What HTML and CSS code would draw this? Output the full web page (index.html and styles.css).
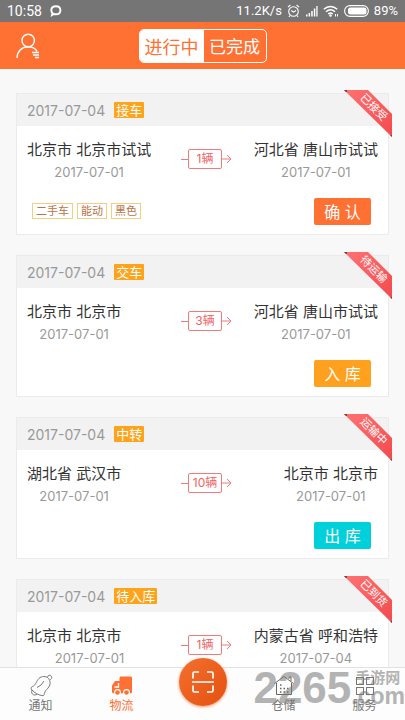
FILE: index.html
```html
<!DOCTYPE html>
<html lang="zh-CN">
<head>
<meta charset="utf-8">
<meta name="viewport" content="width=device-width, initial-scale=1">
<title>物流</title>
<link rel="stylesheet" href="styles.css">
</head>
<body>
<svg class="defs" aria-hidden="true">
  <defs>
    <linearGradient id="ribbon-fill" x1="0" y1="0" x2="1" y2="1">
      <stop offset="0" stop-color="#ff7272"/>
      <stop offset="1" stop-color="#f24a4e"/>
    </linearGradient>
    <symbol id="ribbon" viewBox="0 0 48 48">
      <path d="M0 1h24l24 24v23z" fill="url(#ribbon-fill)"/>
      <path d="M0 1h3v2h-1zM46 46h2v2z" fill="#8c3436"/>
    </symbol>
    <symbol id="arrow" viewBox="0 0 10 10">
      <path d="M0 5h9M5 1l4 4-4 4" fill="none" stroke="#f07a7a"/>
    </symbol>
  </defs>
</svg>
<div class="app">
  <div class="status">
    <span class="status-time">10:58</span>
    <svg class="status-chat" width="12" height="12" viewBox="0 0 12 12"><path d="M6 1.2c3 0 4.400 1.800 4.400 4S9 9.300 6 9.300c-.9 0-1.500-.1-2.200-.3L2 10l.5-2C1.700 7.300 1.300 6.300 1.300 5.200c0-2.200 1.700-4 4.700-4z" fill="none" stroke="#fff" stroke-width="1.900"/></svg>
    <span class="status-speed">11.2K/s</span>
    <svg width="13" height="14" viewBox="0 0 13 14" fill="none" stroke="#fff" stroke-width="1.100"><circle cx="6.500" cy="7.500" r="4.800"/><path d="M4.200 6.500l2.300 1.700 2.500-1.700M1 3.200L3.400 1M12 3.200L9.600 1M3 11.500l-1 1.500M10 11.500l1 1.500"/></svg>
    <svg width="13" height="12" viewBox="0 0 13 12" fill="#fff"><path d="M1 9.500h1.500v2H1zM3.600 8h1.500v3.500H3.600zM6.200 6h1.500v5.500H6.200zM8.800 3.500h1.500v8H8.800zM11.300 1h1.300v10.500h-1.300z"/></svg>
    <svg width="16" height="12" viewBox="0 0 16 12" fill="none" stroke="#fff" stroke-width="1.500"><path d="M.8 4.300c4-3.600 9.400-3.600 13.400 0M3 6.700c2.700-2.400 6.300-2.400 9 0M5.200 9c1.400-1.200 3.200-1.200 4.600 0"/><circle cx="7.500" cy="10.500" r=".6"/><path d="M12.500 9v2.500M14.500 9v2.500" stroke-width="1"/></svg>
    <svg width="25" height="12" viewBox="0 0 25 12"><rect x=".6" y=".6" width="23.800" height="10.800" rx="5.400" fill="none" stroke="#fff" stroke-width="1.100"/><rect x="4" y="2.500" width="18.500" height="7" rx="2.500" fill="#fff"/></svg>
    <span>89%</span>
  </div>

  <header class="topbar">
    <button class="profile" type="button" aria-label="个人中心">
      <svg width="26" height="26" viewBox="0 0 26 26" fill="none" stroke="#fff" stroke-width="1.400"><circle cx="13.200" cy="7.500" r="6.200"/><path d="M2 25c.2-6.500 4.500-11 11-11.200 4 0 7.200 1.500 9 4.500M17 19.500h7M18 22h6M20 24.500h4"/></svg>
    </button>
    <div class="segment">
      <button class="segment-item is-active" type="button">进行中</button>
      <button class="segment-item" type="button">已完成</button>
    </div>
  </header>

  <main class="list">
    <article class="card">
      <div class="card-head"><time>2017-07-04</time><span class="kind">接车</span></div>
      <div class="route">
        <div class="stop"><span class="place">北京市 北京市试试</span><time>2017-07-01</time></div>
        <div class="count"><i></i><b>1辆</b><svg><use href="#arrow"/></svg></div>
        <div class="stop"><span class="place">河北省 唐山市试试</span><time>2017-07-01</time></div>
      </div>
      <div class="card-foot">
        <ul class="tags"><li>二手车</li><li>能动</li><li>黑色</li></ul>
        <button class="action confirm" type="button">确 认</button>
      </div>
      <div class="ribbon"><svg><use href="#ribbon"/></svg><span>已接受</span></div>
    </article>

    <article class="card">
      <div class="card-head"><time>2017-07-04</time><span class="kind">交车</span></div>
      <div class="route">
        <div class="stop"><span class="place">北京市 北京市</span><time>2017-07-01</time></div>
        <div class="count"><i></i><b>3辆</b><svg><use href="#arrow"/></svg></div>
        <div class="stop"><span class="place">河北省 唐山市试试</span><time>2017-07-01</time></div>
      </div>
      <div class="card-foot"><button class="action store" type="button">入 库</button></div>
      <div class="ribbon"><svg><use href="#ribbon"/></svg><span>待运输</span></div>
    </article>

    <article class="card">
      <div class="card-head"><time>2017-07-04</time><span class="kind">中转</span></div>
      <div class="route">
        <div class="stop"><span class="place">湖北省 武汉市</span><time>2017-07-01</time></div>
        <div class="count"><i></i><b>10辆</b><svg><use href="#arrow"/></svg></div>
        <div class="stop"><span class="place">北京市 北京市</span><time>2017-07-01</time></div>
      </div>
      <div class="card-foot"><button class="action release" type="button">出 库</button></div>
      <div class="ribbon"><svg><use href="#ribbon"/></svg><span>运输中</span></div>
    </article>

    <article class="card">
      <div class="card-head"><time>2017-07-04</time><span class="kind">待入库</span></div>
      <div class="route">
        <div class="stop stop-wide"><span class="place">北京市 北京市</span><time>2017-07-01</time></div>
        <div class="count"><i></i><b>1辆</b><svg><use href="#arrow"/></svg></div>
        <div class="stop"><span class="place">内蒙古省 呼和浩特</span><time>2017-07-04</time></div>
      </div>
      <div class="card-foot"></div>
      <div class="ribbon"><svg><use href="#ribbon"/></svg><span>已到货</span></div>
    </article>
  </main>

  <nav class="tabs">
    <a class="tab" href="#notice">
      <svg width="24" height="24" viewBox="0 0 24 24" fill="none" stroke="#777" stroke-width="1"><path d="M18.500 3.500C15.500 1.800 11.500 2.300 9 5.500c-2.200 2.800-1.800 5.200-5.800 7.200-1.700.9-1.500 1.900-.2 3.300 2.500 2.800 6.500 5 9.800 5.600 1.900.3 2.500-.5 2.700-2.100.4-3.500 3.300-4.200 4.900-7.500 1.300-2.800.9-6-1.900-8.500z"/><path d="M18.500 3.500c.2-2 1.600-2.700 3.200-1.900 1.500.9 1.500 3-.9 4.400M3 16c-1.200 3.200.8 6.300 5 4.400M8 13.500l4-2.500 3-4"/></svg>
      <span>通知</span>
    </a>
    <a class="tab is-current" href="#logistics">
      <svg width="24" height="24" viewBox="0 0 24 24"><path d="M9.500 4c0-1 .5-1.500 1.500-1.500h9.500c1 0 1.500.5 1.500 1.500v14c0 .8-.4 1.200-1 1.200H3.300c-.9 0-1.300-.4-1.300-1.200v-6.500L5 7h4.500z" fill="#ff7033"/><path d="M8.500 9v4H4.500" fill="none" stroke="#fff" stroke-width="1.300"/><circle cx="7.500" cy="18.500" r="3.400" fill="#fff"/><circle cx="16.500" cy="18.500" r="3.400" fill="#fff"/><circle cx="7.500" cy="18.500" r="2.300" fill="#ff7033"/><circle cx="16.500" cy="18.500" r="2.300" fill="#ff7033"/></svg>
      <span>物流</span>
    </a>
    <div class="tab">
      <button class="scan" type="button" aria-label="扫一扫">
        <svg width="24" height="24" viewBox="0 0 24 24" fill="none" stroke="#fff" stroke-width="1.700"><path d="M2 8.500V3.500Q2 2 3.500 2H8M16 2h4.500Q22 2 22 3.500v5M22 15.500v5q0 1.500-1.500 1.500H16M8 22H3.500Q2 22 2 20.500v-5M1 12h22"/></svg>
      </button>
    </div>
    <a class="tab" href="#storage">
      <svg width="24" height="24" viewBox="0 0 24 24" fill="none" stroke="#666"><path d="M2.500 9.500L12 2.500l9.500 7M4.500 9v11.500h15V9M17 5V3h2v4"/><path d="M8 11h1.500M8 14.500h1.500M8 18h1.500M11.500 14.500H13M11.500 18H13M15 14.500h1.500M15 18h1.500" stroke-width="1.500"/></svg>
      <span>仓储</span>
    </a>
    <a class="tab" href="#service">
      <svg width="24" height="24" viewBox="0 0 24 24" fill="none" stroke="#777"><rect x="3.500" y="3.500" width="7" height="7"/><rect x="13.500" y="3.500" width="7" height="7"/><rect x="3.500" y="13.500" width="7" height="7"/><rect x="13.500" y="13.500" width="7" height="7"/></svg>
      <span>服务</span>
    </a>
  </nav>

  <div class="watermark">
    <span class="watermark-number">2265</span>
    <span class="watermark-side"><span class="watermark-name">手游网</span><span class="watermark-com">.com</span></span>
  </div>
</div>
</body>
</html>
```

FILE: styles.css
```css
* {
  box-sizing: border-box;
}

body {
  margin: 0;
  background: #f8f8f8;
  color: #333;
  font-family: Inter, "Noto Sans CJK SC", sans-serif;
}

button {
  margin: 0;
  padding: 0;
  border: 0;
  background: none;
  font-family: inherit;
}

svg {
  display: block;
  flex: none;
}

.defs {
  position: absolute;
  width: 0;
  height: 0;
}

.app {
  position: relative;
  display: flex;
  flex-direction: column;
  height: 100vh;
  overflow: hidden;
}

.status {
  display: flex;
  align-items: center;
  gap: 5px;
  flex: none;
  height: 22px;
  padding: 0 7px;
  background: #757575;
  color: #fff;
  font: 13px/22px Roboto, sans-serif;
}

.status-time {
  font-size: 14px;
}

.status-chat {
  margin-left: 3px;
}

.status-speed {
  margin-left: auto;
}

.topbar {
  display: grid;
  grid-template-columns: 1fr auto 1fr;
  align-items: center;
  flex: none;
  height: 47px;
  padding: 0 15px;
  background: #ff7033;
}

.profile {
  justify-self: start;
}

.segment {
  display: flex;
  height: 34px;
  overflow: hidden;
  border: 1px solid #fff;
  border-radius: 5px;
}

.segment-item {
  width: 62px;
  color: #fff;
  font-size: 17px;
}

.segment-item.is-active {
  width: 64px;
  background: #fff;
  color: #ff7033;
  font-size: 18px;
}

.list {
  display: flex;
  flex-direction: column;
  gap: 20px;
  flex: 1;
  min-height: 0;
  padding: 24px 16px 0;
  overflow-y: auto;
  scrollbar-width: none;
}

.card {
  position: relative;
  flex: none;
  border: 1px solid #ebebeb;
  background: #fff;
}

.card-head {
  display: flex;
  align-items: center;
  gap: 9px;
  height: 32px;
  padding: 0 10px;
  background: #f2f2f2;
  color: #999;
  font-size: 14px;
}

.kind {
  padding: 0 2px;
  border-radius: 1px;
  background: #ffa31a;
  color: #fff;
  font-size: 13px;
  line-height: 16px;
}

.route {
  display: grid;
  grid-template-columns: 1fr auto 1fr;
  padding: 12px 10px 0;
}

.stop {
  display: flex;
  flex-direction: column;
  align-items: center;
  justify-self: start;
  color: #999;
  font-size: 13px;
  line-height: 20px;
}

.stop:last-child {
  justify-self: end;
}

.stop-wide {
  min-width: 125px;
}

.place {
  align-self: flex-start;
  color: #333;
  font-size: 15px;
  line-height: 24px;
  white-space: nowrap;
}

.count {
  display: flex;
  align-items: center;
  align-self: center;
  padding: 0 0 2px 8px;
}

.count i {
  width: 7px;
  height: 1px;
  background: #f07a7a;
}

.count b {
  width: 34px;
  border: 1px solid #f07a7a;
  border-radius: 2px;
  color: #f06464;
  font-size: 12px;
  font-weight: 400;
  line-height: 18px;
  text-align: center;
}

.count svg {
  width: 10px;
  height: 10px;
}

.card-foot {
  display: flex;
  align-items: center;
  height: 52px;
  padding: 6px 17px 0 15px;
}

.tags {
  display: flex;
  gap: 4px;
  margin: 0;
  padding: 0;
  list-style: none;
}

.tags li {
  padding: 0 3px;
  border: 1px solid #f5cf80;
  color: #b9744a;
  font-size: 11px;
  line-height: 14px;
}

.action {
  width: 57px;
  height: 27px;
  margin-left: auto;
  border-radius: 2px;
  color: #fff;
  font-size: 16px;
}

.confirm {
  background: #ff7033;
}

.store {
  background: #ffa01e;
}

.release {
  background: #00d0da;
}

.ribbon {
  position: absolute;
  top: -5px;
  right: -4px;
  width: 48px;
  height: 48px;
}

.ribbon svg {
  width: 48px;
  height: 48px;
}

.ribbon span {
  position: absolute;
  top: 10px;
  left: 10px;
  width: 40px;
  color: #fff;
  font-size: 11px;
  line-height: 16px;
  text-align: center;
  transform: rotate(45deg);
}

.tabs {
  display: grid;
  grid-template-columns: repeat(5, 1fr);
  flex: none;
  position: relative;
  height: 53px;
  border-top: 1px solid #e2e2e2;
  background: #fdfdfd;
}

.tab {
  display: flex;
  flex-direction: column;
  align-items: center;
  padding-top: 6px;
  color: #777;
  font-size: 12px;
  line-height: 16px;
  text-decoration: none;
}

.tab.is-current {
  color: #ff7033;
}

.scan {
  display: grid;
  place-items: center;
  flex: none;
  width: 48px;
  height: 48px;
  margin-top: -16px;
  border-radius: 50%;
  background: linear-gradient(135deg, #f4702f, #e4500f);
  box-shadow: 0 1px 3px rgba(228, 80, 15, 0.6);
}

.watermark {
  position: absolute;
  right: 0;
  bottom: 13px;
  display: flex;
  align-items: flex-end;
  color: #777;
  opacity: 0.55;
  pointer-events: none;
}

.watermark-number {
  font: bold 44px/38px "Liberation Sans", sans-serif;
}

.watermark-side {
  display: flex;
  flex-direction: column;
}

.watermark-name {
  padding-left: 4px;
  font-size: 15px;
  font-weight: 700;
  line-height: 14px;
}

.watermark-com {
  font: bold 23px/22px "Liberation Sans", sans-serif;
}
```
